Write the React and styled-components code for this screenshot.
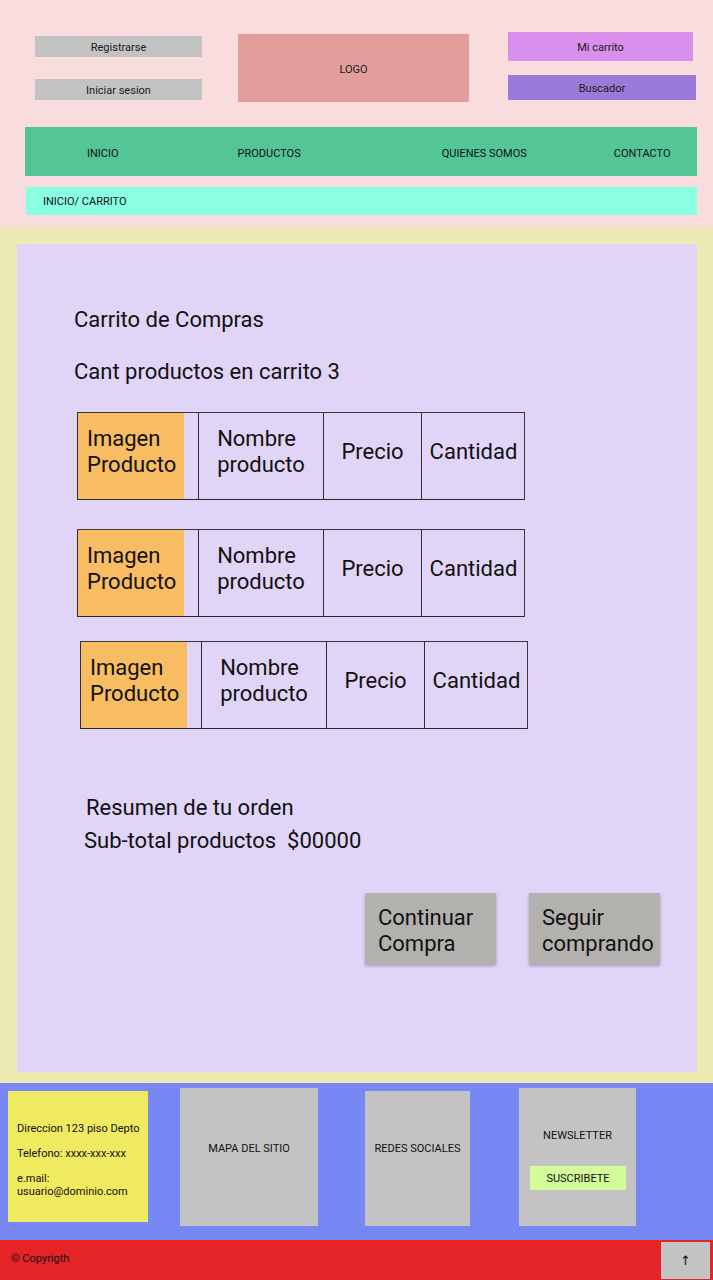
import React from "react";
import styled, { createGlobalStyle } from "styled-components";

const Global = createGlobalStyle`
  html, body { margin: 0; padding: 0; }
  body { font-family: Roboto, "Noto Sans", Arial, sans-serif; color: #111; }
  * { box-sizing: border-box; }
`;

const Page = styled.div`
  width: 713px;
  display: flex;
  flex-direction: column;
`;

/* ---------- Header ---------- */
const Header = styled.header`
  background: #f9dcdd;
  padding: 32px 16px 12px 25px;
  display: flex;
  flex-direction: column;
`;

const TopRow = styled.div`
  display: flex;
  align-items: flex-start;
`;

const Column = styled.div`
  display: flex;
  flex-direction: column;
  gap: ${(p) => p.$gap}px;
  margin-top: ${(p) => p.$mt || 0}px;
  margin-left: ${(p) => p.$ml || 0}px;
`;

const SmallBox = styled.div`
  width: ${(p) => p.$w}px;
  height: ${(p) => p.$h}px;
  background: ${(p) => p.$bg};
  display: flex;
  align-items: center;
  justify-content: center;
  padding-top: 2px;
  font-size: 11px;
  color: #1a1a1a;
  margin-top: ${(p) => p.$mt || 0}px;
  margin-left: ${(p) => p.$ml || 0}px;
`;

const Nav = styled.nav`
  margin-top: 25px;
  height: 49px;
  background: #54c596;
  display: flex;
  align-items: center;
  padding-top: 3px;
  font-size: 11px;
`;

const NavItem = styled.span`
  margin-left: ${(p) => p.$ml}px;
`;

const Breadcrumb = styled.div`
  margin-top: 11px;
  margin-left: 1px;
  height: 28px;
  background: #8affe2;
  display: flex;
  align-items: center;
  padding-left: 17px;
  font-size: 11px;
`;

/* ---------- Main ---------- */
const Main = styled.main`
  background: #ede9b3;
  padding: 17px 16px 11px 17px;
`;

const Panel = styled.section`
  background: #e0d4f7;
  height: 828px;
  padding: 63px 0 0 57px;
  display: flex;
  flex-direction: column;
`;

const Heading = styled.div`
  font-size: 22px;
  line-height: 26px;
  margin-top: ${(p) => p.$mt || 0}px;
  margin-left: ${(p) => p.$ml || 0}px;
  white-space: pre;
`;

const Row = styled.div`
  width: 448px;
  height: 88px;
  display: grid;
  grid-template-columns: 121px 125px 98px 104px;
  border-top: 1px solid #3a3a3a;
  border-bottom: 1px solid #2a2a2a;
  border-right: 1px solid #3a3a3a;
  margin-top: ${(p) => p.$mt}px;
  margin-left: ${(p) => p.$ml}px;
`;

const Cell = styled.div`
  border-left: 1px solid #2f2f2f;
  display: flex;
  align-items: center;
  justify-content: center;
  font-size: 22px;
  line-height: 26px;
  padding-bottom: 8px;
`;

const ImageCell = styled.div`
  border-left: 1px solid #2f2f2f;
  display: flex;
  align-items: stretch;
  font-size: 22px;
  line-height: 26px;
`;

const ImageBlock = styled.div`
  width: 106px;
  background: #f8bc62;
  padding: 0 0 8px 9px;
  display: flex;
  align-items: center;
`;

const Actions = styled.div`
  margin-top: 39px;
  margin-left: 291px;
  display: flex;
  gap: 33px;
`;

const ActionButton = styled.button`
  width: 131px;
  height: 71px;
  border: none;
  background: #b3b1ae;
  box-shadow: 0 2px 3px rgba(60, 50, 90, 0.35);
  font-family: inherit;
  font-size: 22px;
  line-height: 26px;
  color: #111;
  text-align: left;
  padding: 12px 0 0 13px;
  display: flex;
  align-items: flex-start;
`;

/* ---------- Footer ---------- */
const Footer = styled.footer`
  background: #7788f5;
  height: 157px;
  display: flex;
  align-items: flex-start;
  padding-left: 8px;
`;

const FooterBox = styled.div`
  width: ${(p) => p.$w}px;
  height: ${(p) => p.$h}px;
  margin-top: ${(p) => p.$mt}px;
  margin-left: ${(p) => p.$ml || 0}px;
  background: ${(p) => p.$bg || "#c3c3c3"};
  font-size: 11px;
  display: flex;
  flex-direction: column;
  align-items: center;
  padding-top: ${(p) => p.$pt || 0}px;
`;

const ContactBox = styled.div`
  width: 140px;
  height: 131px;
  margin-top: 8px;
  background: #f0ea60;
  font-size: 11px;
  line-height: 13px;
  padding: 31px 0 0 9px;
  display: flex;
  flex-direction: column;
  gap: 12px;
`;

const Subscribe = styled.div`
  margin-top: 24px;
  margin-left: 11px;
  align-self: flex-start;
  width: 96px;
  height: 24px;
  background: #d4fa9a;
  display: flex;
  align-items: center;
  justify-content: center;
  padding-top: 1px;
`;

const BottomBar = styled.div`
  background: #e52428;
  height: 40px;
  display: flex;
  align-items: center;
  justify-content: space-between;
  padding: 0 3px 0 11px;
  font-size: 11px;
`;

const Copy = styled.span`
  margin-top: -3px;
`;

const UpButton = styled.button`
  width: 49px;
  height: 37px;
  margin-top: 1px;
  border: none;
  background: #c3c3c3;
  font-size: 13px;
  color: #111;
  font-family: "DejaVu Sans", sans-serif;
  display: flex;
  align-items: center;
  justify-content: center;
`;

const rows = [
  { mt: 27, ml: 3 },
  { mt: 29, ml: 3 },
  { mt: 24, ml: 6 },
];

export default function App() {
  return (
    <Page>
      <Global />
      <Header>
        <TopRow>
          <Column $gap={22} $mt={4} $ml={10}>
            <SmallBox $w={167} $h={21} $bg="#c3c3c3">Registrarse</SmallBox>
            <SmallBox $w={167} $h={21} $bg="#c3c3c3">Iniciar sesion</SmallBox>
          </Column>
          <SmallBox $w={231} $h={68} $bg="#e39e9c" $mt={2} $ml={36}>
            LOGO
          </SmallBox>
          <Column $gap={14} $ml={39}>
            <SmallBox $w={185} $h={29} $bg="#d890ec">Mi carrito</SmallBox>
            <SmallBox $w={188} $h={25} $bg="#9b7bd9">Buscador</SmallBox>
          </Column>
        </TopRow>
        <Nav>
          <NavItem $ml={62}>INICIO</NavItem>
          <NavItem $ml={119}>PRODUCTOS</NavItem>
          <NavItem $ml={141}>QUIENES SOMOS</NavItem>
          <NavItem $ml={87}>CONTACTO</NavItem>
        </Nav>
        <Breadcrumb>INICIO/ CARRITO</Breadcrumb>
      </Header>

      <Main>
        <Panel>
          <Heading>Carrito de Compras</Heading>
          <Heading $mt={26}>Cant productos en carrito 3</Heading>
          {rows.map((r, i) => (
            <Row key={i} $mt={r.mt} $ml={r.ml}>
              <ImageCell>
                <ImageBlock>
                  Imagen
                  <br />
                  Producto
                </ImageBlock>
              </ImageCell>
              <Cell>
                <span>
                  Nombre
                  <br />
                  producto
                </span>
              </Cell>
              <Cell>Precio</Cell>
              <Cell>Cantidad</Cell>
            </Row>
          ))}
          <Heading $mt={66} $ml={12}>Resumen de tu orden</Heading>
          <Heading $mt={7} $ml={10}>{"Sub-total productos  $00000"}</Heading>
          <Actions>
            <ActionButton>
              Continuar
              <br />
              Compra
            </ActionButton>
            <ActionButton>
              Seguir
              <br />
              comprando
            </ActionButton>
          </Actions>
        </Panel>
      </Main>

      <Footer>
        <ContactBox>
          <span>Direccion 123 piso Depto</span>
          <span>Telefono: xxxx-xxx-xxx</span>
          <span>
            e.mail:
            <br />
            usuario@dominio.com
          </span>
        </ContactBox>
        <FooterBox $w={138} $h={138} $mt={5} $ml={32} $pt={54}>
          MAPA DEL SITIO
        </FooterBox>
        <FooterBox $w={105} $h={135} $mt={8} $ml={47} $pt={51}>
          REDES SOCIALES
        </FooterBox>
        <FooterBox $w={117} $h={138} $mt={5} $ml={49} $pt={41}>
          NEWSLETTER
          <Subscribe>SUSCRIBETE</Subscribe>
        </FooterBox>
      </Footer>
      <BottomBar>
        <Copy>© Copyrigth</Copy>
        <UpButton>↑</UpButton>
      </BottomBar>
    </Page>
  );
}
